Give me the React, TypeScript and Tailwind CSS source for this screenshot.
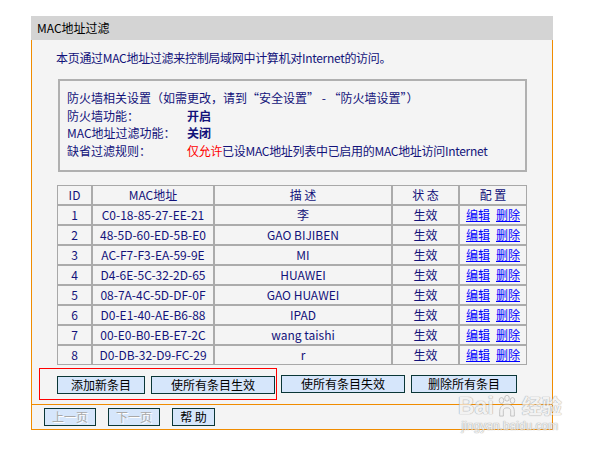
import React from "react";

type Row = [string, string, string];

const rows: Row[] = [
  ["1", "C0-18-85-27-EE-21", "李"],
  ["2", "48-5D-60-ED-5B-E0", "GAO BIJIBEN"],
  ["3", "AC-F7-F3-EA-59-9E", "MI"],
  ["4", "D4-6E-5C-32-2D-65", "HUAWEI"],
  ["5", "08-7A-4C-5D-DF-0F", "GAO HUAWEI"],
  ["6", "D0-E1-40-AE-B6-88", "IPAD"],
  ["7", "00-E0-B0-EB-E7-2C", "wang taishi"],
  ["8", "D0-DB-32-D9-FC-29", "r"],
];

function Btn({ children, className = "", disabled }: { children: React.ReactNode; className?: string; disabled?: boolean }) {
  return (
    <button
      type="button"
      className={`flex h-[18px] items-center justify-center border border-[#0a3636] bg-[#d6e6fb] text-[12px] leading-none ${
        disabled ? "text-[#a9a9a9] [text-shadow:1px_1px_0_#ffffff]" : "text-black"
      } ${className}`}
    >
      {children}
    </button>
  );
}

function Cell({ children, className = "" }: { children: React.ReactNode; className?: string }) {
  return <div className={`flex h-[18px] items-center justify-center bg-[#f4f4f4] ${className}`}>{children}</div>;
}

export default function App() {
  return (
    <div className="relative h-[449px] w-[599px] bg-white pl-[31px] pt-[16px] font-['Noto_Sans_CJK_SC',sans-serif] text-[12px] text-[#12127a]">
      <div className="w-[522px]">
        <div className="flex h-[24px] items-center bg-[#d4d4d4] pl-[6px] text-black">MAC地址过滤</div>

        <div className="flex flex-col border-x border-[#f08c00] bg-[#f4f4f4] pb-[4px] pt-[9px]">
          <p className="pl-[24px] leading-[18px] tracking-[-0.3px]">本页通过MAC地址过滤来控制局域网中计算机对Internet的访问。</p>

          <div className="ml-[26px] mt-[12px] h-[93px] w-[469px] border-2 border-[#b0b0b0] pl-[7px] pt-[8px] leading-[17.7px]">
            <div>防火墙相关设置（如需更改，请到“安全设置” - “防火墙设置”）</div>
            <div className="flex">
              <span className="w-[120px]">防火墙功能：</span>
              <span className="font-bold">开启</span>
            </div>
            <div className="flex">
              <span className="w-[120px]">MAC地址过滤功能：</span>
              <span className="font-bold">关闭</span>
            </div>
            <div className="flex">
              <span className="w-[120px]">缺省过滤规则：</span>
              <span className="tracking-[-0.3px]">
                <span className="text-[#ff0000]">仅允许</span>已设MAC地址列表中已启用的MAC地址访问Internet
              </span>
            </div>
          </div>

          <div className="ml-[25px] mt-[13px] grid w-[470px] grid-cols-[33px_120px_176px_65px_66px] gap-[2px] border border-[#a8a8a8] bg-[#ababab] leading-[18px]">
            <Cell>ID</Cell>
            <Cell>MAC地址</Cell>
            <Cell>描 述</Cell>
            <Cell>状 态</Cell>
            <Cell>配 置</Cell>
            {rows.map(([id, mac, desc]) => (
              <React.Fragment key={id}>
                <Cell>{id}</Cell>
                <Cell>{mac}</Cell>
                <Cell>{desc}</Cell>
                <Cell>生效</Cell>
                <Cell className="gap-[6px] text-[#0000ff]">
                  <span className="underline">编辑</span>
                  <span className="underline">删除</span>
                </Cell>
              </React.Fragment>
            ))}
          </div>

          <div className="mt-[3px] flex items-center">
            <div className="ml-[7px] flex gap-[6px] border border-[#ff0000] pb-[5px] pl-[17px] pr-[1px] pt-[7px]">
              <Btn className="w-[88px]">添加新条目</Btn>
              <Btn className="w-[124px]">使所有条目生效</Btn>
            </div>
            <Btn className="ml-[4px] w-[124px]">使所有条目失效</Btn>
            <Btn className="ml-[6px] w-[106px]">删除所有条目</Btn>
          </div>
        </div>

        <div className="flex gap-[12px] border border-[#f08c00] bg-[#f4f4f4] pb-[3px] pl-[12px] pt-[3px]">
          <Btn disabled className="w-[52px]">上一页</Btn>
          <Btn disabled className="w-[52px]">下一页</Btn>
          <Btn className="w-[43px]">帮 助</Btn>
        </div>
      </div>

      <div className="pointer-events-none absolute left-[458px] top-[395px] flex flex-col items-center opacity-70">
        <div className="flex h-[22px] items-center text-[#f2f2f2] [text-shadow:0_0_1px_#8a8a8a,0_0_1px_#8a8a8a]">
          <span className="font-['Liberation_Sans',sans-serif] text-[23px] font-bold leading-[22px]">Bai</span>
          <svg width="24" height="22" viewBox="0 0 26 24" className="mx-[1px]">
            <g fill="#f2f2f2" stroke="#9a9a9a" strokeWidth="0.8">
              <ellipse cx="7" cy="6" rx="2.5" ry="3.2" />
              <ellipse cx="13" cy="3.5" rx="2.5" ry="3.2" />
              <ellipse cx="19" cy="6" rx="2.5" ry="3.2" />
              <path d="M5 18 C5 12 9 10 13 10 C17 10 21 12 21 18 L21 23 L17 23 L17 17 C17 15 15 14 13 14 C11 14 9 15 9 17 L9 23 L5 23 Z" />
            </g>
          </svg>
          <span className="ml-[2px] text-[20px] font-bold leading-[22px]">经验</span>
        </div>
        <span className="mt-[3px] font-['Liberation_Sans',sans-serif] text-[12px] leading-[12px] text-[#f2f2f2] [text-shadow:0_0_1px_#8a8a8a,0_0_1px_#8a8a8a]">
          jingyan.baidu.com
        </span>
      </div>
    </div>
  );
}
